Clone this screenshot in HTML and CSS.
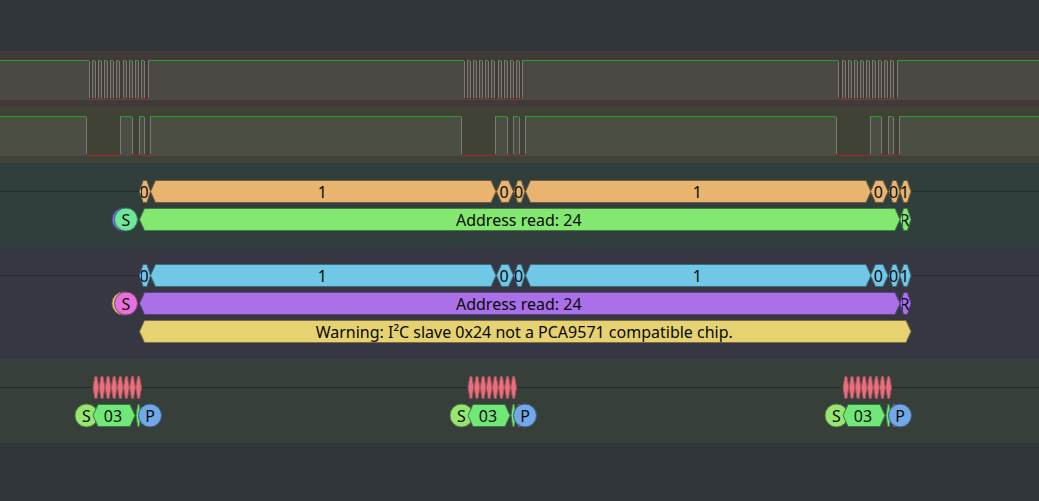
FILE: index.html
```html
<!DOCTYPE html>
<html lang="en">
<head>
<meta charset="utf-8">
<title>Logic trace</title>
<link rel="stylesheet" href="styles.css">
</head>
<body>
<main class="traces">
  <section class="track logic scl" aria-label="Clock"><svg class="wave" id="scl"></svg></section>
  <section class="track logic sda" aria-label="Data"><svg class="wave" id="sda"></svg></section>
  <section class="track two-rows i2c" aria-label="Decoder"><svg class="wave" id="decoder-a"></svg></section>
  <section class="track three-rows chip" aria-label="Chip decoder"><svg class="wave" id="decoder-b"></svg></section>
  <section class="track two-rows bus" aria-label="Bus"><svg class="wave" id="decoder-c"></svg></section>
</main>
<script src="trace.js"></script>
</body>
</html>
```

FILE: styles.css
```css
body {
  margin: 0;
  min-height: 100vh;
  background: #31363b;
  font-family: "Noto Sans", "Open Sans", sans-serif;
  font-size: 16px;
}

.traces {
  display: flex;
  flex-direction: column;
  padding: 51px 0;
}

.track {
  display: flex;
  overflow: hidden;
}

.logic { height: 56px; }
.two-rows { height: 84px; }
.three-rows { height: 112px; }

.scl { background: #413a38; }
.sda { background: #404236; }
.i2c { background: #313f3c; }
.chip { background: #373744; }
.bus { background: #373f3a; }

.wave {
  display: block;
  width: 100%;
  height: 100%;
}

.level { fill: #4c4844; }
.sda .level { fill: #4a4e43; }
.edge { fill: #7b7a76; }
.high { fill: #21a321; }
.low { fill: #9c1a1a; }
.base { fill: #504b46; }
.axis { fill: #232b2b; }
.chip .axis { fill: #272932; }

.label {
  fill: #080808;
  text-anchor: middle;
}

.shape { stroke-width: 1px; }
.orange { fill: #e8b470; stroke: #745d3e; }
.green { fill: #83e870; stroke: #457842; }
.mint { fill: #70e89b; stroke: #397653; }
.indigo { fill: #7870e8; stroke: #41418a; }
.blue { fill: #70c7e6; stroke: #3e6c80; }
.purple { fill: #aa70e8; stroke: #59407a; }
.pink { fill: #e870dc; stroke: #79407a; }
.yellow { fill: #e6d270; stroke: #7a6d42; }
.red { fill: #e8707d; stroke: #a54f59; }
.lime { fill: #97e670; stroke: #50783f; }
.leaf { fill: #70e878; stroke: #3c7942; }
.sky { fill: #70a8e8; stroke: #3d5a7b; }
```

FILE: trace.js
```js
const NS = "http://www.w3.org/2000/svg";

function add(parent, tag, attrs, text) {
  const node = document.createElementNS(NS, tag);
  for (const key in attrs) node.setAttribute(key, attrs[key]);
  if (text) node.textContent = text;
  parent.appendChild(node);
  return node;
}

// Draws one digital channel from a list of [start, end] high periods.
function drawLogic(id, highs) {
  const svg = document.getElementById(id);
  const box = (cls, x, y, width, height) =>
    add(svg, "rect", { class: cls, x, y, width, height });
  box("base", 0, 48, "100%", 1);
  highs.forEach(([start, end], i) => {
    const last = i === highs.length - 1;
    const width = last ? "100%" : end - start;
    box("level", start, 9, width, 39);
    box("high", start, 9, width, 1);
    if (i > 0) box("edge", start, 10, 1, 37);
    if (!last) {
      box("edge", end, 10, 1, 37);
      box("low", end, 47, highs[i + 1][0] - end + 1, 1);
    }
  });
}

function drawAxis(svg, spans) {
  spans.forEach(([x, width]) =>
    add(svg, "rect", { class: "axis", x, y: 28, width, height: 1 }));
}

function label(svg, x, row, text, clip) {
  const y = 35 + row * 28;
  if (!clip) {
    add(svg, "text", { class: "label", x, y }, text);
    return;
  }
  const view = add(svg, "svg", { x: clip[0], y: 0, width: clip[1] - clip[0], height: "100%", overflow: "hidden" });
  add(view, "text", { class: "label", x: x - clip[0], y }, text);
}

function block(svg, color, start, end, row, text, clip) {
  const top = 17.5 + row * 28, mid = top + 11, bottom = top + 22;
  const slope = Math.min(5, (end - start) / 3);
  add(svg, "polygon", {
    class: "shape " + color,
    points: `${start},${mid} ${start + slope},${top} ${end - slope},${top} ${end},${mid} ${end - slope},${bottom} ${start + slope},${bottom}`
  });
  if (text) label(svg, (start + end) / 2 - 1, row, text, clip);
}

function dot(svg, color, x, text) {
  add(svg, "circle", { class: "shape " + color, cx: x, cy: 56.5, r: 11.5 });
  if (text) label(svg, x, 1, text);
}

function pulses(first, step) {
  return Array.from({ length: 9 }, (_, i) => {
    const x = Math.round(first + i * step);
    return [x, x + 3];
  });
}

drawLogic("scl", [
  [0, 89], ...pulses(92, 6.1),
  [148, 464], ...pulses(467, 6.1),
  [522, 838], ...pulses(842, 6), [897, 0]
]);
drawLogic("sda", [
  [0, 86], [120, 132], [139, 144], [150, 461],
  [495, 507], [513, 519], [525, 836], [870, 881], [888, 893], [899, 0]
]);

function drawAddress(id, bits, address, read, backDot, frontDot) {
  const svg = document.getElementById(id);
  drawAxis(svg, [[0, 140], [911, "100%"]]);
  block(svg, bits, 139.5, 150.5, 0, "0", [141, 148]);
  block(svg, bits, 150.5, 496, 0, "1");
  block(svg, bits, 496.5, 513.5, 0, "0");
  block(svg, bits, 514, 525, 0, "0", [515, 523]);
  block(svg, bits, 525.5, 871, 0, "1");
  block(svg, bits, 870.5, 888, 0, "0");
  block(svg, bits, 889, 900, 0, "0", [890, 898]);
  block(svg, bits, 900, 911, 0, "1", [901, 909]);
  block(svg, address, 139.5, 900, 1, "Address read: 24");
  block(svg, read, 900, 911, 1, "R", [902, 909]);
  dot(svg, backDot, 123.5);
  dot(svg, frontDot, 126, "S");
  return svg;
}

drawAddress("decoder-a", "orange", "green", "green", "indigo", "mint");
const chip = drawAddress("decoder-b", "blue", "purple", "purple", "yellow", "pink");
block(chip, "yellow", 139.5, 911, 2, "Warning: I²C slave 0x24 not a PCA9571 compatible chip.");

const bus = document.getElementById("decoder-c");
drawAxis(bus, [[0, 93], [142, 326], [516, 327], [891, "100%"]]);
[93, 468, 843].forEach((x, i) => {
  for (let n = 0; n < 8; n++) block(bus, "red", x + n * 6.1, x + n * 6.1 + 5.8, 0);
  dot(bus, "lime", x - 6.5, "S");
  block(bus, "leaf", x, x + 42, 1, "03");
  block(bus, "leaf", x + 43, x + 48, 1);
  if (i) block(bus, "red", x + 49, x + 53, 1);
  dot(bus, "sky", x + 57, "P");
});
```
